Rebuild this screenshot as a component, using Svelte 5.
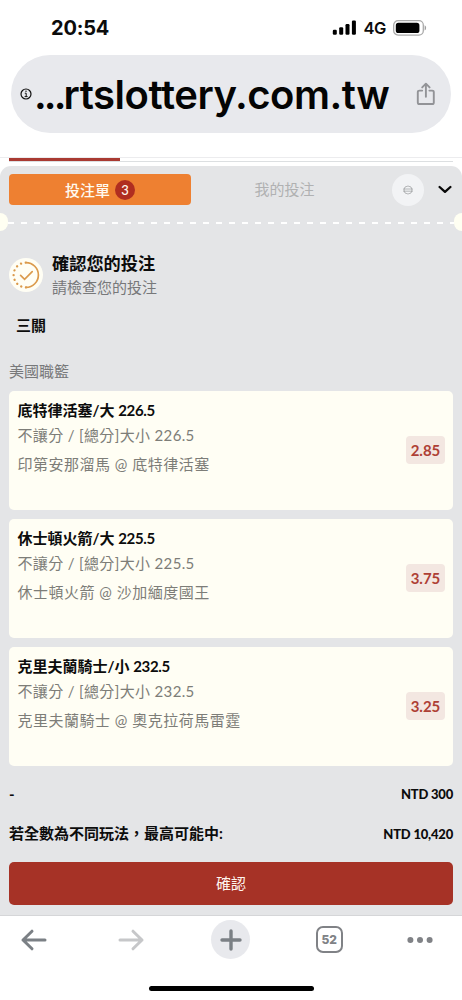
<script lang="ts">
  type Bet = { pick: string; line: string; market: string; match: string; odds: string }

  const bets: Bet[] = [
    {
      pick: '底特律活塞/大',
      line: '226.5',
      market: '不讓分 / [總分]大小',
      match: '印第安那溜馬 @ 底特律活塞',
      odds: '2.85',
    },
    {
      pick: '休士頓火箭/大',
      line: '225.5',
      market: '不讓分 / [總分]大小',
      match: '休士頓火箭 @ 沙加緬度國王',
      odds: '3.75',
    },
    {
      pick: '克里夫蘭騎士/小',
      line: '232.5',
      market: '不讓分 / [總分]大小',
      match: '克里夫蘭騎士 @ 奧克拉荷馬雷霆',
      odds: '3.25',
    },
  ]
</script>

<div class="screen">
  <header class="status">
    <span class="time">20:54</span>
    <div class="signals">
      <svg width="25" height="16" viewBox="0 0 25 16">
        <rect x="0.8" y="9.8" width="4" height="5" rx="1.2" />
        <rect x="7.2" y="7.2" width="4" height="7.6" rx="1.2" />
        <rect x="13.5" y="4" width="4" height="10.8" rx="1.2" />
        <rect x="19.9" y="0.6" width="4" height="14.2" rx="1.2" />
      </svg>
      <span class="network">4G</span>
      <svg width="34" height="16" viewBox="0 0 34 16">
        <rect x="0.7" y="0.7" width="29.6" height="14.4" rx="4.4" fill="none" stroke="#a9a9a9" stroke-width="1.3" />
        <rect x="2.8" y="2.8" width="23.6" height="10.2" rx="2.6" />
        <path d="M31.6 5.3c2 .8 2 4.4 0 5.2z" fill="#a0a0a0" />
      </svg>
    </div>
  </header>

  <div class="address">
    <svg class="info" width="12" height="12" viewBox="0 0 12 12" fill="none" stroke="#111">
      <circle cx="6" cy="6" r="5" stroke-width="1.2" />
      <path d="M4.8 5.2h1.4v3.3M4.6 8.6h3" stroke-width="1" />
      <circle cx="6" cy="3.3" r="0.7" fill="#111" stroke="none" />
    </svg>
    <span class="url"><span class="dots">...</span>rtslottery.com.tw</span>
    <svg width="20" height="24" viewBox="0 0 20 24" fill="none" stroke="#929397" stroke-width="1.9" stroke-linecap="round" stroke-linejoin="round">
      <path d="M6.2 8.6H3.4c-1 0-1.6.6-1.6 1.5v10.3c0 1 .6 1.6 1.6 1.6h12.8c1 0 1.6-.6 1.6-1.6V10.1c0-.9-.6-1.5-1.6-1.5h-2.8" />
      <path d="M9.9 14.8V2M6.2 5.4 9.9 1.7l3.7 3.7" />
    </svg>
  </div>

  <div class="page-edge">
    <div class="rule"></div>
    <div class="track"><div class="active"></div></div>
  </div>

  <main class="slip">
    <nav class="tabs">
      <button class="tab on">投注單 <span class="count">3</span></button>
      <button class="tab">我的投注</button>
      <div class="settings">
        <svg width="10" height="10" viewBox="0 0 10 10" fill="none" stroke="#a5a6a8" stroke-width="0.8">
          <circle cx="5" cy="5" r="4" />
          <path d="M0 4h10M0 6.2h10" />
        </svg>
      </div>
      <svg class="chevron" width="14" height="9" viewBox="0 0 14 9" fill="none" stroke="#080808" stroke-width="2.3" stroke-linecap="round" stroke-linejoin="round">
        <path d="M1.6 2L7 6.9 12.4 2" />
      </svg>
    </nav>

    <div class="tear">
      <span class="notch"></span>
      <span class="dashes"></span>
      <span class="notch right"></span>
    </div>

    <section class="confirm">
      <svg width="34" height="34" viewBox="0 0 34 34" fill="none" stroke="#db9a4b" stroke-width="1.7" stroke-linecap="round">
        <circle cx="17" cy="17" r="17" fill="#fffef4" stroke="none" />
        <path d="M17 4.6a12.4 12.4 0 0 1 0 24.8" />
        <path d="M17 29.4a12.4 12.4 0 0 1 0-24.8" stroke-width="2.3" stroke-dasharray="0.1 4.7" />
        <path d="M11.6 17.4l4 3.9 7.6-7.6" />
      </svg>
      <div>
        <h1>確認您的投注</h1>
        <p>請檢查您的投注</p>
      </div>
    </section>

    <h2>三關</h2>
    <p class="league">美國職籃</p>

    <div class="bets">
      {#each bets as bet}
        <article class="bet">
          <div>
            <h3>{bet.pick} <span>{bet.line}</span></h3>
            <p class="market">{bet.market} <span>{bet.line}</span></p>
            <p class="match">{bet.match}</p>
          </div>
          <span class="odds">{bet.odds}</span>
        </article>
      {/each}
    </div>

    <div class="total first"><span>-</span><b>NTD 300</b></div>
    <div class="total"><span class="label">若全數為不同玩法，最高可能中:</span><b>NTD 10,420</b></div>
    <button class="submit">確認</button>
  </main>

  <footer>
    <div class="toolbar">
      <svg width="28" height="24" viewBox="0 0 28 24" fill="none" stroke="#7b8085" stroke-width="3" stroke-linecap="round" stroke-linejoin="round">
        <path d="M25 12H3M12 3.2L3 12l9 8.8" />
      </svg>
      <svg width="28" height="24" viewBox="0 0 28 24" fill="none" stroke="#c6c7c9" stroke-width="3" stroke-linecap="round" stroke-linejoin="round">
        <path d="M2 12h22M15 3.2l9 8.8-9 8.8" />
      </svg>
      <div class="add">
        <svg width="24" height="24" viewBox="0 0 24 24" stroke="#7b8085" stroke-width="3.4" stroke-linecap="round">
          <path d="M12 3v18M3 12h18" />
        </svg>
      </div>
      <div class="count-tabs">52</div>
      <svg class="more" width="28" height="24" viewBox="0 0 28 24" fill="#808286">
        <circle cx="4.4" cy="12" r="3" />
        <circle cx="14" cy="12" r="3" />
        <circle cx="23.6" cy="12" r="3" />
      </svg>
    </div>
    <div class="home"></div>
  </footer>
</div>

<style>
  :global(body) {
    margin: 0;
    background: #fff;
  }

  .screen {
    width: 462px;
    height: 1000px;
    display: flex;
    flex-direction: column;
    overflow: hidden;
    background: #fff;
    color: #0c0c0c;
    font-family: Lato, 'Noto Sans CJK TC', sans-serif;
    font-size: 15px;
  }

  .screen * {
    box-sizing: border-box;
  }

  h1,
  h2,
  h3,
  p {
    margin: 0;
  }

  svg {
    display: block;
    flex: none;
  }

  button {
    border: none;
    padding: 0;
    font: inherit;
  }

  .status {
    height: 55px;
    flex: none;
    display: flex;
    justify-content: space-between;
    align-items: center;
    padding: 0 35px 0 51px;
    font-family: Inter, sans-serif;
  }

  .time {
    font-size: 20px;
    font-weight: 700;
    letter-spacing: -0.2px;
  }

  .signals {
    display: flex;
    align-items: center;
  }

  .network {
    width: 36.5px;
    padding-left: 7px;
    font-size: 16.5px;
    font-weight: 600;
    letter-spacing: -0.4px;
    white-space: nowrap;
  }

  .address {
    height: 78px;
    flex: none;
    display: flex;
    align-items: center;
    margin: 0 11px;
    padding: 0 15px 0 9px;
    border-radius: 39px;
    background: #e8e9ed;
    color: #040404;
  }

  .url {
    flex: 1;
    padding-left: 2px;
    font-family: Inter, sans-serif;
    font-size: 40px;
    font-weight: 600;
    letter-spacing: -0.45px;
    white-space: nowrap;
  }

  .dots {
    letter-spacing: -2.9px;
  }

  .page-edge {
    height: 33px;
    flex: none;
    padding-top: 24px;
  }

  .rule {
    height: 1px;
    background: #ececee;
  }

  .track {
    height: 4px;
    margin: 0 9px;
    border-bottom: 1px solid #dcdfe1;
  }

  .active {
    width: 111px;
    height: 3px;
    background: #a93a32;
  }

  .slip {
    height: 749px;
    flex: none;
    padding: 8px 9px 0;
    border-radius: 11px 11px 0 0;
    background: #e4e5e7;
  }

  .tabs {
    height: 31px;
    display: flex;
    align-items: center;
  }

  .tab {
    width: 187px;
    height: 31px;
    padding-bottom: 2px;
    background: none;
    color: #b0b1b2;
  }

  .tab.on {
    width: 182px;
    padding-bottom: 0;
    display: flex;
    justify-content: center;
    align-items: center;
    gap: 5px;
    border-radius: 4px;
    background: #ee8031;
    color: #fffaf0;
    font-weight: 500;
    line-height: 20px;
  }

  .count {
    width: 20px;
    height: 20px;
    border-radius: 50%;
    background: #b02e20;
    font-size: 13px;
    line-height: 20px;
  }

  .settings {
    width: 32px;
    height: 32px;
    margin-left: 14px;
    display: grid;
    place-items: center;
    border-radius: 50%;
    background: #f2f3f5;
  }

  .chevron {
    margin-left: 14px;
  }

  .tear {
    height: 18px;
    margin: 8px -9px 0;
    display: flex;
    align-items: center;
  }

  .notch {
    width: 8px;
    height: 18px;
    border-radius: 0 9px 9px 0;
    background: #fffff2;
  }

  .notch.right {
    border-radius: 9px 0 0 9px;
  }

  .dashes {
    flex: 1;
    height: 2px;
    margin-top: 2px;
    background: repeating-linear-gradient(90deg, #fff 0 6px, transparent 6px 13px);
  }

  .confirm {
    display: flex;
    gap: 9px;
    margin-top: 20px;
  }

  .confirm svg {
    margin-top: 7px;
  }

  h1 {
    font-size: 17.2px;
    line-height: 25px;
    font-weight: 700;
  }

  .confirm p {
    color: #77787a;
    line-height: 22px;
  }

  h2 {
    margin: 16px 0 0 7px;
    font-size: 15px;
    line-height: 22px;
    font-weight: 700;
  }

  .league {
    margin-top: 24px;
    line-height: 22px;
    color: #77787a;
  }

  .bets {
    display: flex;
    flex-direction: column;
    gap: 8.5px;
    margin-top: 8.5px;
  }

  .bet {
    height: 119.5px;
    display: flex;
    justify-content: space-between;
    align-items: center;
    padding: 0 8px 0 8.5px;
    border-radius: 5px;
    background: #fffef4;
  }

  .bet > div {
    align-self: flex-start;
    padding-top: 7px;
  }

  h3 {
    font-size: 15px;
    line-height: 24px;
    font-weight: 700;
  }

  h3 span {
    letter-spacing: -0.3px;
  }

  .market,
  .match {
    color: #7d7d78;
    letter-spacing: 0.5px;
    line-height: 26px;
  }

  .market {
    letter-spacing: 0.35px;
  }

  .match {
    margin-top: 3px;
  }

  .odds {
    width: 39px;
    height: 28px;
    border-radius: 4px;
    background: #f3e7e1;
    color: #ae4035;
    font-weight: 700;
    line-height: 28px;
    text-align: center;
  }

  .total {
    height: 40px;
    display: flex;
    justify-content: space-between;
    align-items: center;
    font-weight: 700;
  }

  .total.first {
    margin-top: 8px;
  }

  .label {
    padding-bottom: 3px;
  }

  .total b {
    font-size: 13px;
    letter-spacing: -0.2px;
  }

  .submit {
    width: 100%;
    height: 43px;
    margin-top: 8px;
    padding-bottom: 2px;
    border-radius: 5px;
    background: #a63226;
    color: #fff6ef;
  }

  footer {
    flex: 1;
    border-top: 1px solid #d5d6d8;
    background: #fff;
  }

  .toolbar {
    height: 47px;
    display: grid;
    grid-template-columns: repeat(5, 98.5px);
    place-items: center;
    margin-left: -15.5px;
  }

  .more {
    margin-right: 15px;
  }

  .add {
    width: 39px;
    height: 39px;
    display: grid;
    place-items: center;
    border-radius: 50%;
    background: #e8e9ed;
  }

  .count-tabs {
    width: 27px;
    height: 27px;
    border: 2.5px solid #808286;
    border-radius: 7px;
    color: #808286;
    font-family: Inter, sans-serif;
    font-size: 12px;
    font-weight: 800;
    line-height: 23px;
    text-align: center;
  }

  .home {
    width: 165px;
    height: 5px;
    margin: 23px auto 0;
    border-radius: 3px;
    background: #000;
  }
</style>
